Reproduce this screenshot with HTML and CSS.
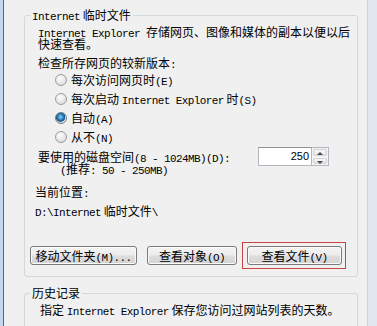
FILE: index.html
```html
<!DOCTYPE html>
<html lang="zh-CN">
<head>
    <meta charset="UTF-8">
    <title>Internet 临时文件设置</title>
    <link rel="stylesheet" href="styles.css">
</head>
<body>
    <div class="window">
        <div class="frame-left"></div>

        <div class="panel">
            <fieldset class="group">
                <legend><span class="en">Internet</span> 临时文件</legend>
                <div class="group-body">
                    <p class="desc"><span class="en">Internet Explorer </span>存储网页、图像和媒体的副本以便以后<br>快速查看。</p>

                    <p class="check-label">检查所存网页的较新版本<span class="en">:</span></p>
                    <div class="radios">
                        <label class="radio-row"><input type="radio" name="check"><span>每次访问网页时<span class="en">(E)</span></span></label>
                        <label class="radio-row"><input type="radio" name="check"><span>每次启动 <span class="en">Internet Explorer</span> 时<span class="en">(S)</span></span></label>
                        <label class="radio-row"><input type="radio" name="check" checked><span>自动<span class="en">(A)</span></span></label>
                        <label class="radio-row"><input type="radio" name="check"><span>从不<span class="en">(N)</span></span></label>
                    </div>

                    <div class="disk-row">
                        <div class="disk-text">
                            <p>要使用的磁盘空间<span class="en">(8 - 1024MB)(D):</span></p>
                            <p class="hint"><span class="en">(</span>推荐<span class="en">: 50 - 250MB)</span></p>
                        </div>
                        <div class="spinner">
                            <div class="spin-value">250</div>
                            <div class="spin-buttons">
                                <span class="spin-up"></span>
                                <span class="spin-down"></span>
                            </div>
                        </div>
                    </div>

                    <p class="loc-label">当前位置<span class="en">:</span></p>
                    <p class="loc-path"><span class="en">D:\Internet</span> 临时文件<span class="en">\</span></p>

                    <div class="actions">
                        <button class="btn btn-move">移动文件夹<span class="en">(M)...</span></button>
                        <button class="btn btn-objects">查看对象<span class="en">(O)</span></button>
                        <span class="marked">
                            <button class="btn btn-files">查看文件<span class="en">(V)</span></button>
                        </span>
                    </div>
                </div>
            </fieldset>

            <fieldset class="group group-history">
                <legend>历史记录</legend>
                <div class="group-body">
                    <p class="history-desc">指定 <span class="en">Internet Explorer</span> 保存您访问过网站列表的天数。</p>
                </div>
            </fieldset>
        </div>

        <div class="frame-right"></div>
    </div>
</body>
</html>
```

FILE: styles.css
```css
* {
    margin: 0;
    padding: 0;
    box-sizing: border-box;
}

body {
    font-family: 'Noto Sans CJK SC', 'Noto Sans', sans-serif;
    font-size: 12px;
    color: #000;
    background: #f0f0f0;
    overflow: hidden;
}

/* latin runs: half-width monospace like the old dialog font */
.en {
    font-family: 'Liberation Mono', 'DejaVu Sans Mono', monospace;
    font-size: 11px;
    letter-spacing: -0.6px;
    line-height: 0;
}

.window {
    display: flex;
    height: 326px;
}

.frame-left {
    width: 4px;
    background: #c2d6ee;
    border-right: 1px solid #5e6670;
}

.frame-right {
    width: 10px;
    background: #e2e7ee;
    border-left: 1px solid #cfd3d8;
}

.panel {
    flex: 1;
    padding: 8px 9px 0 20px;
    background: #f0f0f0;
}

/* group boxes */
.group {
    border: 1px solid #d3d8dc;
    border-radius: 3px;
    padding: 0;
    min-width: 0;
}

.group legend {
    margin-left: 5px;
    padding: 0 2px;
    line-height: 14px;
}

.group-body {
    padding: 0 4px 11px 13px;
}

.desc {
    margin-top: 4px;
    line-height: 12px;
    white-space: nowrap;
}

.check-label {
    margin-top: 6px;
    line-height: 14px;
}

/* radio list */
.radios {
    margin-left: 17px;
}

.radio-row {
    display: flex;
    align-items: center;
    height: 19px;
    line-height: 14px;
    white-space: nowrap;
}

.radio-row input {
    appearance: none;
    flex: none;
    width: 12px;
    height: 12px;
    margin-right: 4px;
    border: 1px solid #9a9c9e;
    border-radius: 50%;
    background: radial-gradient(circle at 40% 35%, #fdfdfd 0%, #e4e4e4 60%, #cfcfcf 100%);
}

.radio-row input:checked {
    border-color: #6b7d8c;
    background: radial-gradient(circle at 45% 40%, #8fd0f2 0%, #2a83c0 35%, #124f80 55%, #e6e6e6 62%, #d0d0d0 100%);
}

/* disk space row */
.disk-row {
    display: flex;
    align-items: flex-start;
    margin-top: 1px;
    margin-right: 24px;
}

.disk-text {
    padding-top: 4px;
    line-height: 12px;
    white-space: nowrap;
}

.hint {
    margin-left: 22px;
}

.spinner {
    display: flex;
    margin-left: auto;
    height: 19px;
}

.spin-value {
    width: 54px;
    border: 1px solid #b4b7bd;
    border-top-color: #8e9399;
    background: #fff;
    font-family: 'Liberation Sans', Arial, sans-serif;
    font-size: 11px;
    line-height: 17px;
    text-align: right;
    padding-right: 2px;
}

.spin-buttons {
    display: flex;
    flex-direction: column;
    width: 17px;
    border: 1px solid #b4b7bd;
    border-left: none;
    background: #f4f4f4;
}

.spin-buttons span {
    flex: 1;
    position: relative;
    margin: 1px;
    border: 1px solid #cfd2d6;
    border-radius: 2px;
    background: linear-gradient(#f8f8f8, #e2e2e2);
}

.spin-up::after,
.spin-down::after {
    content: "";
    position: absolute;
    left: 3px;
    top: 2px;
    border-left: 3px solid transparent;
    border-right: 3px solid transparent;
}

.spin-up::after {
    border-bottom: 3px solid #4a4a4a;
}

.spin-down::after {
    border-top: 3px solid #4a4a4a;
}

/* current location */
.loc-label {
    margin-top: 10px;
    margin-left: -3px;
    line-height: 14px;
}

.loc-path {
    margin-top: 5px;
    margin-left: -3px;
    line-height: 14px;
}

/* buttons */
.actions {
    display: flex;
    align-items: flex-start;
    gap: 10px;
    margin-top: 28px;
    margin-left: -8px;
}

.btn {
    height: 19px;
    font-family: inherit;
    font-size: 12px;
    line-height: 15px;
    color: #000;
    border: 1px solid #7a7a7a;
    border-radius: 3px;
    background: linear-gradient(#f4f4f4 0%, #ececec 48%, #dedede 52%, #d2d2d2 100%);
    box-shadow: inset 0 0 0 1px #fbfbfb;
    cursor: pointer;
}

.btn-move {
    width: 107px;
}

.btn-objects {
    width: 90px;
}

.btn-files {
    width: 95px;
}

/* red annotation frame around the highlighted button */
.marked {
    display: flex;
    margin: -4px -4px -4px -5px;
    padding: 3px 3px 3px 4px;
    border: 1px solid #c94545;
}

.group-history {
    margin-top: 9px;
    padding-bottom: 20px;
}

.history-desc {
    margin-top: 3px;
    margin-left: 2px;
    line-height: 14px;
    white-space: nowrap;
}
```
